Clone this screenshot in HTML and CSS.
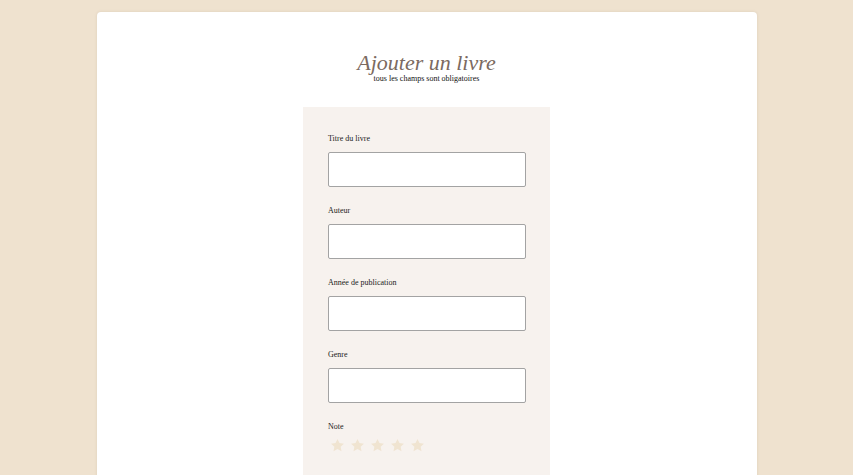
FILE: index.html
```html
<!DOCTYPE html>
<html lang="fr">
<head>
<meta charset="utf-8">
<title>Ajouter un livre</title>
<link rel="stylesheet" href="styles.css">
</head>
<body>
<main class="card">
  <header class="head">
    <h1 class="title">Ajouter un livre</h1>
    <p class="sub">tous les champs sont obligatoires</p>
  </header>
  <form class="panel">
    <div class="group">
      <label class="label">Titre du livre</label>
      <input class="input" type="text">
    </div>
    <div class="group">
      <label class="label">Auteur</label>
      <input class="input" type="text">
    </div>
    <div class="group">
      <label class="label">Année de publication</label>
      <input class="input" type="text">
    </div>
    <div class="group">
      <label class="label">Genre</label>
      <input class="input" type="text">
    </div>
    <div class="group">
      <label class="label">Note</label>
      <div class="stars">
        <svg class="star" viewBox="0 0 24 24"><path d="M12 1.5l3.1 6.6 7.2.9-5.3 5 1.4 7.1L12 17.6l-6.4 3.5 1.4-7.1-5.3-5 7.2-.9z"/></svg>
        <svg class="star" viewBox="0 0 24 24"><path d="M12 1.5l3.1 6.6 7.2.9-5.3 5 1.4 7.1L12 17.6l-6.4 3.5 1.4-7.1-5.3-5 7.2-.9z"/></svg>
        <svg class="star" viewBox="0 0 24 24"><path d="M12 1.5l3.1 6.6 7.2.9-5.3 5 1.4 7.1L12 17.6l-6.4 3.5 1.4-7.1-5.3-5 7.2-.9z"/></svg>
        <svg class="star" viewBox="0 0 24 24"><path d="M12 1.5l3.1 6.6 7.2.9-5.3 5 1.4 7.1L12 17.6l-6.4 3.5 1.4-7.1-5.3-5 7.2-.9z"/></svg>
        <svg class="star" viewBox="0 0 24 24"><path d="M12 1.5l3.1 6.6 7.2.9-5.3 5 1.4 7.1L12 17.6l-6.4 3.5 1.4-7.1-5.3-5 7.2-.9z"/></svg>
      </div>
    </div>
  </form>
</main>
</body>
</html>
```
FILE: styles.css
```css
html, body {
  margin: 0;
  padding: 0;
}
body {
  background: #efe2cf;
  font-family: "Liberation Serif", "Times New Roman", serif;
  color: #1a1a1a;
  height: 475px;
  overflow: hidden;
}
.card {
  width: 660px;
  margin: 12px auto 0;
  background: #ffffff;
  border-radius: 4px;
  box-shadow: 0 0 3px rgba(120, 100, 70, 0.15);
  min-height: 600px;
  display: flex;
  flex-direction: column;
  align-items: center;
}
.head {
  padding-top: 40px;
  text-align: center;
}
.title {
  margin: 0;
  font-size: 22px;
  line-height: 22px;
  font-style: italic;
  font-weight: normal;
  color: #7b6a60;
}
.sub {
  margin: 0;
  font-size: 8px;
  line-height: 10px;
  color: #111;
}
.panel {
  margin-top: 23px;
  width: 247px;
  box-sizing: border-box;
  padding: 26px 24px 40px 25px;
  background: #f7f2ee;
  display: flex;
  flex-direction: column;
  gap: 18px;
}
.group {
  display: flex;
  flex-direction: column;
  gap: 8px;
}
.label {
  font-size: 8px;
  line-height: 11px;
  color: #222;
}
.input {
  width: 198px;
  height: 35px;
  box-sizing: border-box;
  border: 1px solid #a3a3a3;
  border-radius: 2px;
  background: #fff;
  margin: 0;
  padding: 0 6px;
}
.stars {
  display: flex;
  gap: 5px;
  padding-left: 2px;
  margin-top: -2px;
}
.star {
  width: 15px;
  height: 15px;
  fill: #f0e4d1;
}
```
